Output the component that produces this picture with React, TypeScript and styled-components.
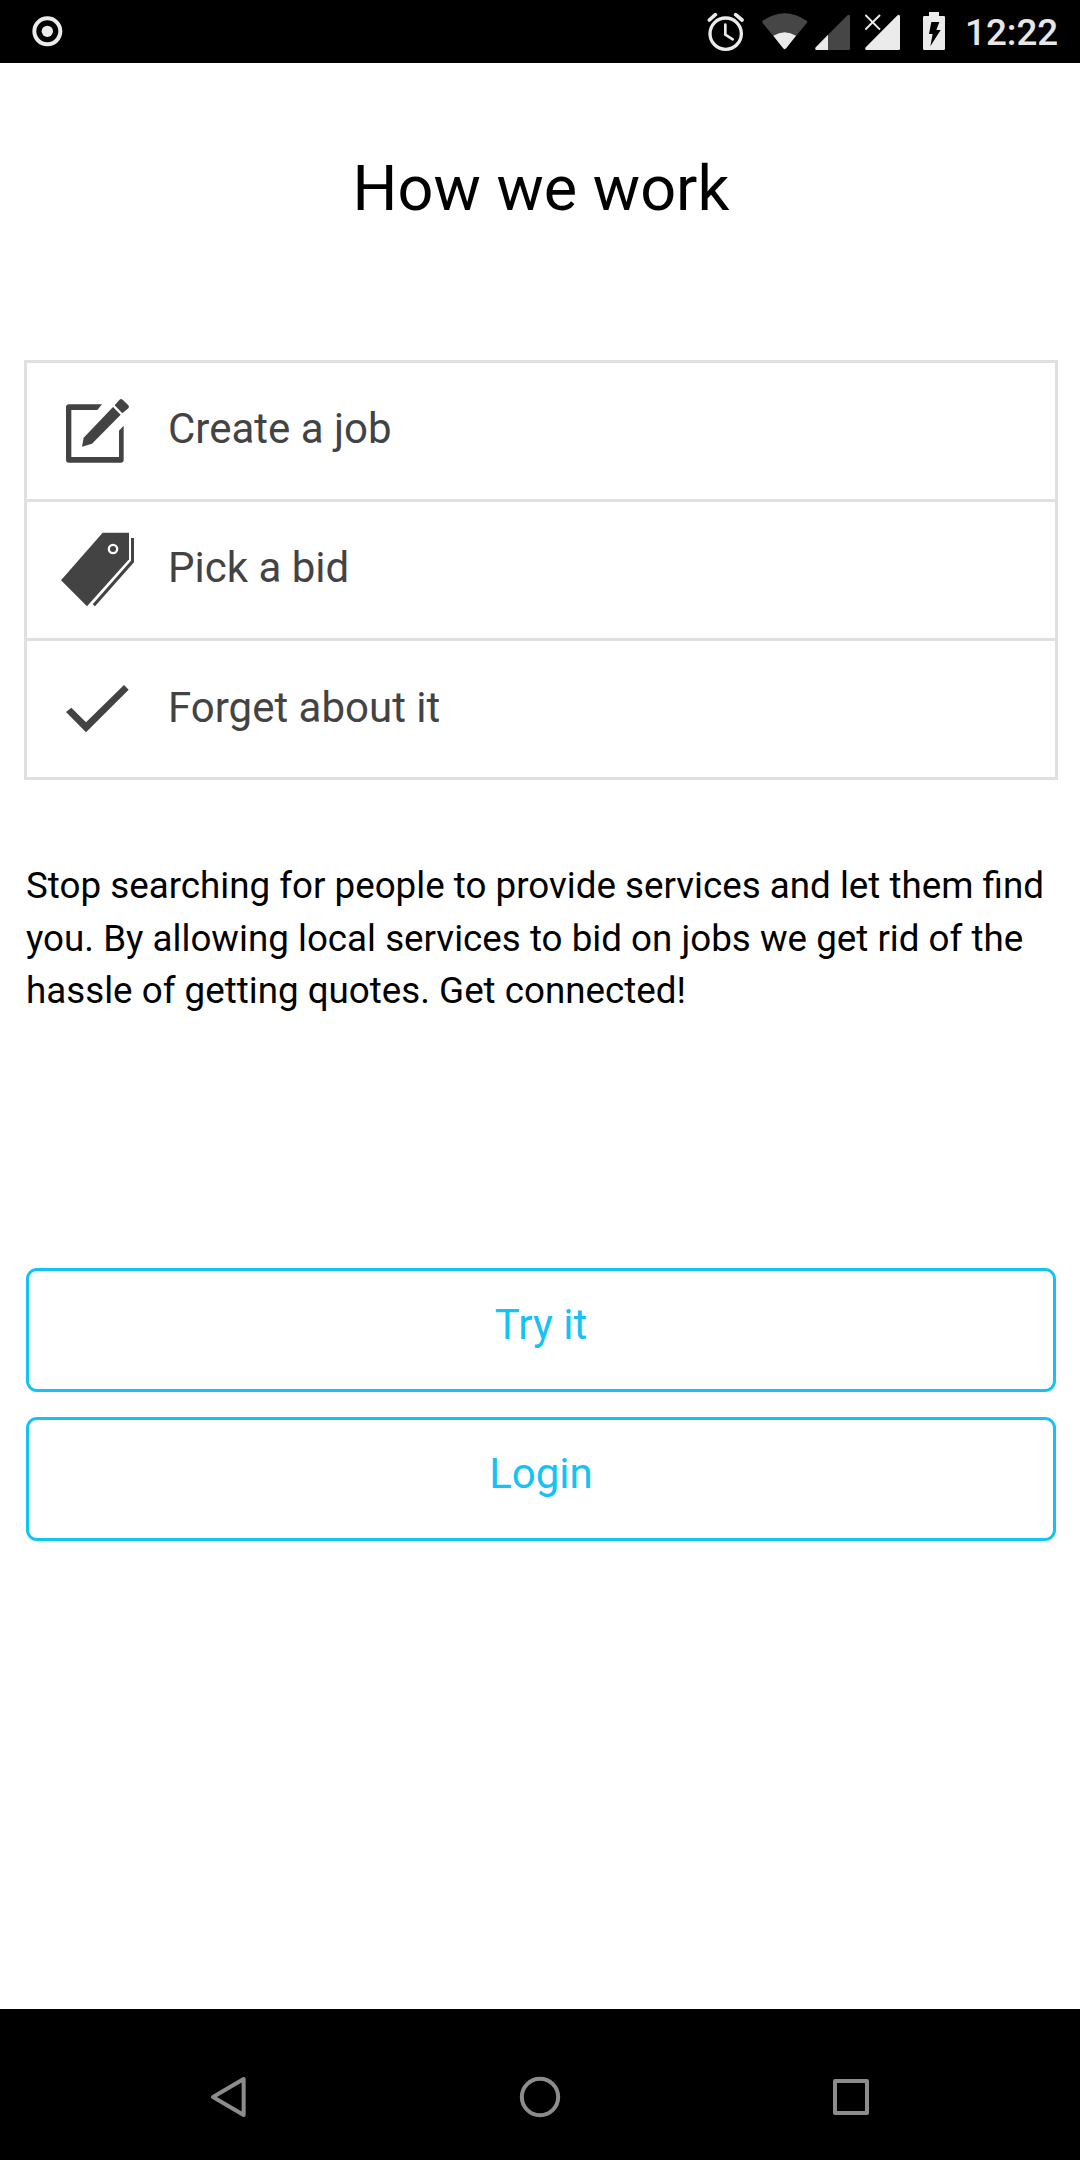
import React from "react";
import styled, { createGlobalStyle } from "styled-components";

const Global = createGlobalStyle`
  * { box-sizing: border-box; }
  body { margin: 0; background: #fff; }
`;

const Screen = styled.div`
  width: 1080px;
  height: 2160px;
  display: flex;
  flex-direction: column;
  background: #fff;
  font-family: Roboto, "Noto Sans", sans-serif;
  color: #000;
`;

const StatusBar = styled.header`
  height: 63px;
  flex: none;
  display: flex;
  padding: 0 21px 0 29px;
  background: #000;
  color: #ebebeb;
`;

const Spacer = styled.div`
  flex: 1;
`;

const Glyph = styled.svg<{ $gap?: number }>`
  display: block;
  flex: none;
  margin-right: ${(p) => p.$gap ?? 0}px;
`;

const Clock = styled.time`
  width: 94px;
  font-size: 36.75px;
  font-weight: 500;
  line-height: 66px;
  white-space: nowrap;
  color: #e6e6e6;
`;

const Content = styled.main`
  flex: 1;
  padding: 0 22px 0 24px;
`;

const Title = styled.h1`
  margin: 0;
  padding-top: 89px;
  height: 297px;
  text-align: center;
  font-size: 63px;
  font-weight: 400;
  line-height: 74px;
`;

const Steps = styled.ul`
  list-style: none;
  margin: 0;
  padding: 0;
  border: 3px solid #e0e0e0;
  border-top: 0;
`;

const Step = styled.li`
  height: 139px;
  display: flex;
  align-items: center;
  padding-left: 27px;
  border-top: 3px solid #e0e0e0;
  color: #434343;
`;

const StepLabel = styled.span<{ $lift: number }>`
  margin-left: 34px;
  padding-bottom: ${(p) => p.$lift}px;
  font-size: 42px;
  line-height: 50px;
`;

const Blurb = styled.p`
  margin: 80px 0 0;
  padding: 0 2px;
  height: 408px;
  font-size: 36.75px;
  line-height: 52.5px;
`;

const Actions = styled.div`
  display: flex;
  flex-direction: column;
  gap: 25px;
  padding: 0 2px;
`;

const ActionButton = styled.button`
  height: 124px;
  border: 3px solid #14c2f5;
  border-radius: 11px;
  background: transparent;
  padding: 0 0 11px;
  font-family: inherit;
  font-size: 42px;
  line-height: 50px;
  color: #14c2f5;
`;

const NavBar = styled.nav`
  height: 151px;
  flex: none;
  display: flex;
  justify-content: center;
  gap: 264px;
  padding-top: 64px;
  background: #000;
`;

const EditIcon = () => (
  <Glyph width="80" height="80" viewBox="0 0 240 240" fill="currentColor">
    <path d="M144 40 130 57H52V198H195V119L209 104V206a9 9 0 0 1-9 9H45a9 9 0 0 1-9-9V49a9 9 0 0 1 9-9Z" />
    <path d="M84 167 89 140 177 48 200 71 114 158Z" />
    <path d="M182 43 196 27Q200 22 206 26L223 43Q227 48 223 52L205 67Z" />
  </Glyph>
);

const TagIcon = () => (
  <Glyph width="80" height="80" viewBox="0 0 240 240" fill="currentColor">
    <path d="M146 8H225V88L99 229 21 151Z" />
    <circle cx="177" cy="57" r="12.5" fill="none" stroke="#fff" strokeWidth="7" />
    <path d="M231 24H240V97L123 229 116 223 231 92Z" />
  </Glyph>
);

const CheckIcon = () => (
  <Glyph width="80" height="80" viewBox="0 0 240 240" fill="currentColor">
    <path d="M36 129 52 116 96 160 210 48 224 62 96 190Z" />
  </Glyph>
);

const steps = [
  { label: "Create a job", Icon: EditIcon, lift: 5 },
  { label: "Pick a bid", Icon: TagIcon, lift: 5 },
  { label: "Forget about it", Icon: CheckIcon, lift: 3 },
];

export default function App() {
  return (
    <Screen>
      <Global />
      <StatusBar>
        <Glyph width="37" height="63" viewBox="0 0 111 189">
          <circle cx="55" cy="94" r="39" fill="none" stroke="currentColor" strokeWidth="12" />
          <circle cx="55" cy="94" r="17" fill="currentColor" />
        </Glyph>
        <Spacer />
        <Glyph width="38" height="63" viewBox="0 0 114 189" $gap={17} fill="none" stroke="currentColor">
          <circle cx="56" cy="101" r="47" strokeWidth="10" />
          <path d="M55 74V104L77 118" strokeWidth="8" strokeLinecap="round" strokeLinejoin="round" />
          <path d="M7 60 25 44M86 44 105 60" strokeWidth="11" strokeLinecap="round" />
        </Glyph>
        <Glyph width="46" height="63" viewBox="0 0 138 189" $gap={7} fill="currentColor">
          <path d="M2 62Q68 17 134 62Q138 65 134 69L73 144Q68 151 63 144L2 69Q-1 65 2 62Z" fill="#464646" />
          <path d="M34 107Q68 86 102 107L73 144Q68 151 63 144Z" />
        </Glyph>
        <Glyph width="35" height="63" viewBox="0 0 105 189" $gap={15} fill="currentColor">
          <path d="M39 104V150H3Q-2 146 3 141Z" />
          <path d="M39 104 96 47Q105 41 105 50V146Q105 150 101 150H39Z" fill="#464646" />
        </Glyph>
        <Glyph width="35" height="63" viewBox="0 0 105 189" $gap={23} fill="currentColor">
          <path d="M3 141 96 47Q105 41 105 50V146Q105 150 101 150H3Q-2 146 3 141Z" />
          <path d="M0 43 46 91M46 43 0 91" stroke="#000" strokeWidth="14" />
          <path d="M1 45 45 89M45 45 1 89" stroke="currentColor" strokeWidth="6" />
        </Glyph>
        <Glyph width="22" height="63" viewBox="0 0 66 189" $gap={20} fill="currentColor">
          <path d="M18 36H48V48H62Q66 48 66 52V146Q66 150 62 150H4Q0 150 0 146V52Q0 48 4 48H18Z" />
          <path d="M25 66H49L40 90H53L22 139 29 102H18Z" fill="#000" />
        </Glyph>
        <Clock>12:22</Clock>
      </StatusBar>
      <Content>
        <Title>How we work</Title>
        <Steps>
          {steps.map(({ label, Icon, lift }) => (
            <Step key={label}>
              <Icon />
              <StepLabel $lift={lift}>{label}</StepLabel>
            </Step>
          ))}
        </Steps>
        <Blurb>
          Stop searching for people to provide services and let them find
          <br />
          you. By allowing local services to bid on jobs we get rid of the
          <br />
          hassle of getting quotes. Get connected!
        </Blurb>
        <Actions>
          <ActionButton>Try it</ActionButton>
          <ActionButton>Login</ActionButton>
        </Actions>
      </Content>
      <NavBar>
        <Glyph width="48" height="48" viewBox="0 0 144 144" fill="none" stroke="#8c8c8c">
          <path d="M27 72 119 18V126Z" strokeWidth="12" strokeLinejoin="round" />
        </Glyph>
        <Glyph width="48" height="48" viewBox="0 0 144 144" fill="none" stroke="#8c8c8c">
          <circle cx="72" cy="72" r="54.5" strokeWidth="12" />
        </Glyph>
        <Glyph width="48" height="48" viewBox="0 0 144 144" fill="none" stroke="#8c8c8c">
          <rect x="21" y="24" width="96" height="96" strokeWidth="12" strokeLinejoin="round" />
        </Glyph>
      </NavBar>
    </Screen>
  );
}
